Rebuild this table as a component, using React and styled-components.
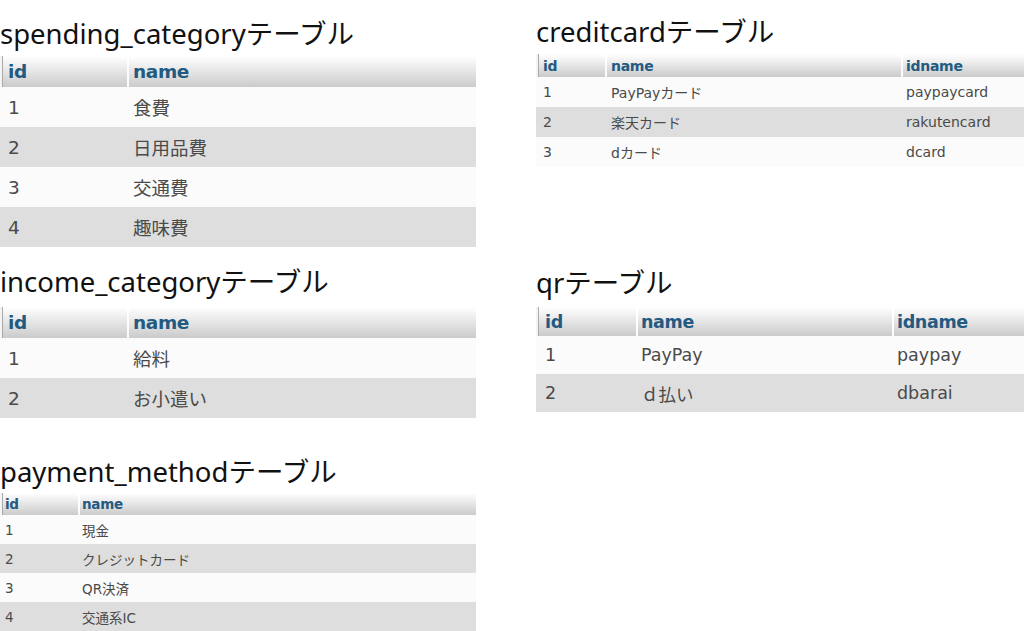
import React from "react";
import styled, { createGlobalStyle } from "styled-components";

const Global = createGlobalStyle`
  html, body { margin: 0; padding: 0; background: #ffffff; }
  body { width: 1024px; height: 631px; overflow: hidden; }
`;

const Page = styled.div`
  display: grid;
  grid-template-columns: 476px 488px;
  column-gap: 60px;
  align-items: start;
`;

const Column = styled.div`
  display: flex;
  flex-direction: column;
`;

const Section = styled.section`
  display: flex;
  flex-direction: column;
  margin-top: ${(p) => p.$top}px;
`;

const Title = styled.h2`
  margin: 0 0 ${(p) => p.$gap}px 0;
  height: 32px;
  line-height: 32px;
  font-family: "Noto Sans", "Noto Sans CJK JP", sans-serif;
  font-weight: 400;
  font-size: 27.5px;
  color: #111;
  white-space: nowrap;
`;

const Table = styled.div`
  display: flex;
  flex-direction: column;
  font-family: "DejaVu Sans", "Noto Sans CJK JP", sans-serif;
  font-size: ${(p) => p.$fs}px;
`;

const HeadRow = styled.div`
  display: grid;
  grid-template-columns: ${(p) => p.$cols};
  height: ${(p) => p.$h}px;
  background: linear-gradient(#ffffff, #cbcbcb);
  box-shadow: inset 2px 0 0 #f4f4f4, inset 3px 0 0 #a9a9a9;
`;

const HeadCell = styled.div`
  display: flex;
  align-items: center;
  padding-left: ${(p) => p.$pad}px;
  font-weight: 700;
  color: #235a81;
  letter-spacing: -0.02em;
  white-space: nowrap;
  & + & {
    border-left: 2px solid rgba(255, 255, 255, 0.9);
  }
`;

const BodyRow = styled.div`
  display: grid;
  grid-template-columns: ${(p) => p.$cols};
  height: ${(p) => p.$h}px;
  background: ${(p) => (p.$even ? "#dedede" : "#fbfbfb")};
`;

const BodyCell = styled.div`
  display: flex;
  align-items: center;
  padding-left: ${(p) => p.$pad}px;
  color: #4a4a4a;
  white-space: nowrap;
  & + & {
    margin-left: 2px;
  }
`;

function DataTable({ cols, headers, rows, headH, rowH, fs, pads }) {
  return (
    <Table $fs={fs}>
      <HeadRow $cols={cols} $h={headH}>
        {headers.map((h, i) => (
          <HeadCell key={h} $pad={pads[i]}>
            {h}
          </HeadCell>
        ))}
      </HeadRow>
      {rows.map((r, ri) => (
        <BodyRow key={ri} $cols={cols} $h={rowH} $even={ri % 2 === 1}>
          {r.map((c, ci) => (
            <BodyCell key={ci} $pad={pads[ci]}>
              {c}
            </BodyCell>
          ))}
        </BodyRow>
      ))}
    </Table>
  );
}

export default function App() {
  return (
    <>
      <Global />
      <Page>
        <Column>
          <Section $top={18}>
            <Title $gap={6}>spending_categoryテーブル</Title>
            <DataTable
              cols="127px 1fr"
              headers={["id", "name"]}
              rows={[
                ["1", "食費"],
                ["2", "日用品費"],
                ["3", "交通費"],
                ["4", "趣味費"],
              ]}
              headH={31}
              rowH={40}
              fs={18.5}
              pads={[8, 4]}
            />
          </Section>
          <Section $top={19}>
            <Title $gap={9}>income_categoryテーブル</Title>
            <DataTable
              cols="127px 1fr"
              headers={["id", "name"]}
              rows={[
                ["1", "給料"],
                ["2", "お小遣い"],
              ]}
              headH={31}
              rowH={40}
              fs={18.5}
              pads={[8, 4]}
            />
          </Section>
          <Section $top={38}>
            <Title $gap={5}>payment_methodテーブル</Title>
            <DataTable
              cols="78px 1fr"
              headers={["id", "name"]}
              rows={[
                ["1", "現金"],
                ["2", "クレジットカード"],
                ["3", "QR決済"],
                ["4", "交通系IC"],
              ]}
              headH={22}
              rowH={29}
              fs={13.5}
              pads={[5, 2]}
            />
          </Section>
        </Column>
        <Column>
          <Section $top={16}>
            <Title $gap={6}>creditcardテーブル</Title>
            <DataTable
              cols="69px 296px 1fr"
              headers={["id", "name", "idname"]}
              rows={[
                ["1", "PayPayカード", "paypaycard"],
                ["2", "楽天カード", "rakutencard"],
                ["3", "dカード", "dcard"],
              ]}
              headH={23}
              rowH={30}
              fs={14}
              pads={[7, 4, 3]}
            />
          </Section>
          <Section $top={100}>
            <Title $gap={8}>qrテーブル</Title>
            <DataTable
              cols="100px 256px 1fr"
              headers={["id", "name", "idname"]}
              rows={[
                ["1", "PayPay", "paypay"],
                ["2", "ｄ払い", "dbarai"],
              ]}
              headH={29}
              rowH={38}
              fs={17.5}
              pads={[9, 3, 3]}
            />
          </Section>
        </Column>
      </Page>
    </>
  );
}
